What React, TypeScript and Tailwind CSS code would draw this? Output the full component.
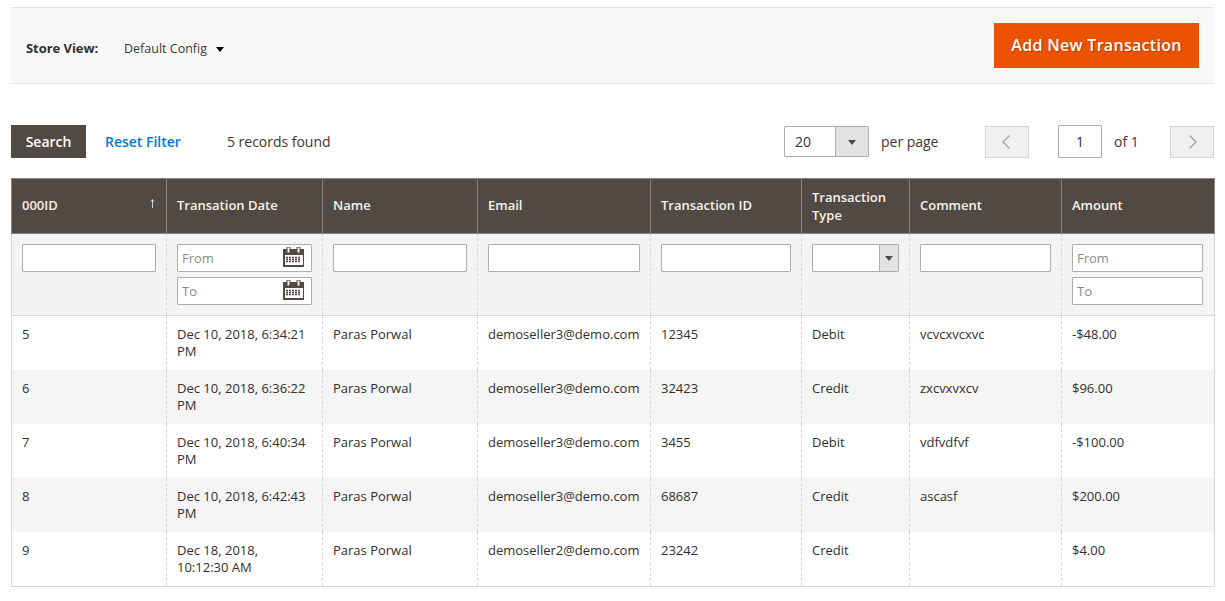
import React from 'react';
import { ChevronLeft, ChevronRight } from 'lucide-react';

const rows = [
  { id: '5', date: 'Dec 10, 2018, 6:34:21 PM', name: 'Paras Porwal', email: 'demoseller3@demo.com', tx: '12345', type: 'Debit', comment: 'vcvcxvcxvc', amount: '-$48.00' },
  { id: '6', date: 'Dec 10, 2018, 6:36:22 PM', name: 'Paras Porwal', email: 'demoseller3@demo.com', tx: '32423', type: 'Credit', comment: 'zxcvxvxcv', amount: '$96.00' },
  { id: '7', date: 'Dec 10, 2018, 6:40:34 PM', name: 'Paras Porwal', email: 'demoseller3@demo.com', tx: '3455', type: 'Debit', comment: 'vdfvdfvf', amount: '-$100.00' },
  { id: '8', date: 'Dec 10, 2018, 6:42:43 PM', name: 'Paras Porwal', email: 'demoseller3@demo.com', tx: '68687', type: 'Credit', comment: 'ascasf', amount: '$200.00' },
  { id: '9', date: 'Dec 18, 2018, 10:12:30 AM', name: 'Paras Porwal', email: 'demoseller2@demo.com', tx: '23242', type: 'Credit', comment: '', amount: '$4.00' },
];

const CalendarIcon = () => (
  <svg width="21" height="20" viewBox="0 0 21 20" className="absolute right-[8px] top-[3px]">
    <rect x="0" y="2" width="21" height="18" fill="#514943" />
    <rect x="2" y="8" width="18" height="10" fill="#fff" />
    <rect x="4" y="0" width="3" height="6" fill="#f4f4f4" stroke="#514943" strokeWidth="1" />
    <rect x="14" y="0" width="3" height="6" fill="#f4f4f4" stroke="#514943" strokeWidth="1" />
    <path d="M3 10.5h15M3 12.5h15M3 14.5h15" stroke="#514943" strokeWidth="1.4" strokeDasharray="2 1" />
  </svg>
);

const textInput = 'block h-[28px] w-full border border-[#adadad] bg-white px-[4px] text-[13px] text-[#303030] rounded-[1px] placeholder:text-[#8a8a8a] outline-none';

const headBase = 'border-x border-[#8a837f] px-[10px] text-left align-middle text-[13px] leading-[18px] font-semibold text-[#f7f3eb]';
const headCell = `${headBase} pb-[2px]`;
const filterCell = 'border-x border-dashed border-[#d6d6d6] px-[10px] pt-[10px] align-top';
const bodyCell = 'border-x border-dashed border-[#d6d6d6] px-[10px] py-[10px] align-top text-[13px] leading-[17px] text-[#303030]';

export default function App() {
  return (
    <div className="min-h-[601px] bg-white px-[11px] pt-[7px] font-['Open_Sans',sans-serif] text-[#303030]">
      <div className="flex h-[77px] items-start justify-between border-y border-[#e3e3e3] bg-[#f8f8f8] pr-[15px] pt-[15px]">
        <div className="mt-[16px] ml-[15px] flex items-start text-[13px] leading-[18px]">
          <span className="w-[73px] font-bold tracking-[-0.05px] text-[#303030]">Store View:</span>
          <span className="ml-[25px] text-[12.5px] leading-[20px] text-[#41362f]">Default Config</span>
          <span className="ml-[9px] mt-[8px] h-0 w-0 border-x-[4px] border-t-[5px] border-x-transparent border-t-black" />
        </div>
        <button className="h-[45px] w-[205px] bg-[#eb5202] pb-[2px] text-[16px] font-semibold tracking-[0.3px] text-white [text-shadow:1px_1px_0_rgba(0,0,0,0.25)]">
          Add New Transaction
        </button>
      </div>

      <div className="mt-[41px] flex h-[33px] items-center whitespace-nowrap text-[14px] tracking-[-0.02px]">
        <button className="h-[33px] w-[75px] shrink-0 bg-[#514943] font-semibold text-white">Search</button>
        <a className="ml-[19px] w-[76px] font-semibold text-[#007bdb]">Reset Filter</a>
        <span className="ml-[46px] w-[103px] text-[#41362f]">5 records found</span>

        <div className="ml-[454px] flex h-[31px] w-[85px] shrink-0 border border-[#adadad] rounded-[1px]">
          <span className="flex w-[50px] items-center pl-[10px] text-[#303030]">20</span>
          <span className="flex flex-1 items-center justify-center border-l border-[#adadad] bg-[#e3e3e3]">
            <span className="mt-[2px] h-0 w-0 border-x-[4px] border-t-[5px] border-x-transparent border-t-[#514943]" />
          </span>
        </div>
        <span className="ml-[12px] w-[57px] text-[#41362f]">per page</span>

        <button className="ml-[47px] flex h-[32px] w-[44px] shrink-0 items-center justify-center border border-[#d6d6d6] bg-[#f0f0f0] pr-[2px] text-[#a3a3a3]">
          <ChevronLeft size={24} strokeWidth={1.4} />
        </button>
        <span className="ml-[29px] flex h-[33px] w-[44px] shrink-0 items-center justify-center border border-[#adadad] bg-white rounded-[1px]">1</span>
        <span className="ml-[12px] w-[24px] text-[#41362f]">of 1</span>
        <button className="ml-[32px] flex h-[32px] w-[44px] shrink-0 items-center justify-center border border-[#d6d6d6] bg-[#f0f0f0] pl-[2px] text-[#a3a3a3]">
          <ChevronRight size={24} strokeWidth={1.4} />
        </button>
      </div>

      <table className="mt-[20px] w-[1203px] table-fixed border-collapse border border-[#d6d6d6]">
        <colgroup>
          <col className="w-[155px]" />
          <col className="w-[156px]" />
          <col className="w-[155px]" />
          <col className="w-[173px]" />
          <col className="w-[151px]" />
          <col className="w-[108px]" />
          <col className="w-[152px]" />
          <col className="w-[153px]" />
        </colgroup>
        <thead>
          <tr className="h-[55px] border-y border-[#8a837f] bg-[#514943]">
            <th className={`${headCell} relative`}>
              000ID
              <svg width="5" height="9" viewBox="0 0 5 9" className="absolute right-[11px] top-[20px]">
                <path d="M2.5 1v8M1 2.5l1.5-2 1.5 2" fill="none" stroke="#c8d8e0" strokeWidth="1" />
              </svg>
            </th>
            <th className={headCell}>Transation Date</th>
            <th className={headCell}>Name</th>
            <th className={headCell}>Email</th>
            <th className={headCell}>Transaction ID</th>
            <th className={headBase}>Transaction Type</th>
            <th className={headCell}>Comment</th>
            <th className={headCell}>Amount</th>
          </tr>
        </thead>
        <tbody>
          <tr className="h-[82px] border-b border-[#d6d6d6] bg-[#f4f4f4]">
            <td className={filterCell}><input className={textInput} /></td>
            <td className={filterCell}>
              <div className="relative">
                <input className={textInput} placeholder="From" />
                <CalendarIcon />
              </div>
              <div className="relative mt-[5px] mb-[10px]">
                <input className={textInput} placeholder="To" />
                <CalendarIcon />
              </div>
            </td>
            <td className={filterCell}><input className={textInput} /></td>
            <td className={filterCell}><input className={textInput} /></td>
            <td className={filterCell}><input className={textInput} /></td>
            <td className={filterCell}>
              <div className="flex h-[28px] border border-[#adadad] bg-white rounded-[1px]">
                <span className="flex-1" />
                <span className="flex w-[19px] items-center justify-center border-l border-[#adadad] bg-[#e3e3e3]">
                  <span className="h-0 w-0 border-x-[4px] border-t-[5px] border-x-transparent border-t-[#514943]" />
                </span>
              </div>
            </td>
            <td className={filterCell}><input className={textInput} /></td>
            <td className={`${filterCell} pr-[11px]`}>
              <input className={textInput} placeholder="From" />
              <input className={`${textInput} mt-[5px] mb-[10px]`} placeholder="To" />
            </td>
          </tr>
          {rows.map((row, i) => (
            <tr key={row.id} className={`h-[54px] ${i % 2 === 1 ? 'bg-[#f5f5f5]' : 'bg-white'}`}>
              <td className={bodyCell}>{row.id}</td>
              <td className={bodyCell}>{row.date}</td>
              <td className={bodyCell}>{row.name}</td>
              <td className={bodyCell}>{row.email}</td>
              <td className={bodyCell}>{row.tx}</td>
              <td className={bodyCell}>{row.type}</td>
              <td className={bodyCell}>{row.comment}</td>
              <td className={bodyCell}>{row.amount}</td>
            </tr>
          ))}
        </tbody>
      </table>
    </div>
  );
}
